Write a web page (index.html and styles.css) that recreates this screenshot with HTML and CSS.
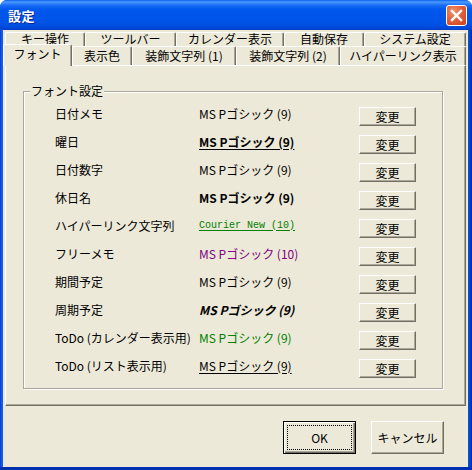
FILE: index.html
```html
<!DOCTYPE html>
<html lang="ja">
<head>
<meta charset="utf-8">
<link rel="stylesheet" href="styles.css">
</head>
<body>
<div class="window">
  <div class="titlebar">
    <span class="title">設定</span>
    <span class="close"><svg width="13" height="13" viewBox="0 0 13 13"><path d="M2 2 L11 11 M11 2 L2 11" stroke="#fff" stroke-width="2.4" stroke-linecap="square"/></svg></span>
  </div>
  <div class="client">
    <div class="tabrow row1">
      <div class="tab w80">キー操作</div>
      <div class="tab w91">ツールバー</div>
      <div class="tab w108">カレンダー表示</div>
      <div class="tab w80">自動保存</div>
      <div class="tab w102">システム設定</div>
    </div>
    <div class="tabrow row2">
      <div class="tab sel">フォント</div>
      <div class="tab w60">表示色</div>
      <div class="tab w104">装飾文字列 (1)</div>
      <div class="tab w104">装飾文字列 (2)</div>
      <div class="tab w126">ハイパーリンク表示</div>
    </div>
    <div class="panel">
      <div class="group">
        <span class="legend">フォント設定</span>
        <div class="row"><span class="label">日付メモ</span><span class="font">MS Pゴシック (9)</span><span class="btn">変更</span></div>
        <div class="row"><span class="label">曜日</span><span class="font bold under">MS Pゴシック (9)</span><span class="btn">変更</span></div>
        <div class="row"><span class="label">日付数字</span><span class="font">MS Pゴシック (9)</span><span class="btn">変更</span></div>
        <div class="row"><span class="label">休日名</span><span class="font bold">MS Pゴシック (9)</span><span class="btn">変更</span></div>
        <div class="row"><span class="label">ハイパーリンク文字列</span><span class="font mono green under">Courier New (10)</span><span class="btn">変更</span></div>
        <div class="row"><span class="label">フリーメモ</span><span class="font purple">MS Pゴシック (10)</span><span class="btn">変更</span></div>
        <div class="row"><span class="label">期間予定</span><span class="font">MS Pゴシック (9)</span><span class="btn">変更</span></div>
        <div class="row"><span class="label">周期予定</span><span class="font italic">MS Pゴシック (9)</span><span class="btn">変更</span></div>
        <div class="row"><span class="label">ToDo (カレンダー表示用)</span><span class="font green">MS Pゴシック (9)</span><span class="btn">変更</span></div>
        <div class="row"><span class="label">ToDo (リスト表示用)</span><span class="font under">MS Pゴシック (9)</span><span class="btn">変更</span></div>
      </div>
    </div>
    <div class="actions">
      <span class="dbtn default"><span class="focus">OK</span></span>
      <span class="dbtn">キャンセル</span>
    </div>
  </div>
</div>
</body>
</html>
```

FILE: styles.css
```css
* { box-sizing: border-box; }
html, body { margin: 0; padding: 0; }
body {
  width: 472px;
  height: 470px;
  overflow: hidden;
  font-family: "Noto Sans CJK JP", "Liberation Sans", sans-serif;
  font-size: 12px;
  color: #000;
  background: #fff;
}
.window {
  width: 472px;
  height: 470px;
  display: flex;
  flex-direction: column;
  background: linear-gradient(to right, #0831D9 0, #166AEE 2px, #0855DD 3px, #0855DD 468px, #0842C8 470px, #0026A8 472px);
  border-radius: 7px 7px 0 0;
  padding: 0 4px 3px 3px;
  box-shadow: inset 0 -3px 0 #0030B0;
}
.titlebar {
  height: 30px;
  flex: none;
  margin: 0 -4px 0 -3px;
  display: flex;
  align-items: center;
  justify-content: space-between;
  padding: 0 5px 0 8px;
  border-radius: 7px 7px 0 0;
  background: linear-gradient(to bottom, #0A60F0 0px, #4C9BFF 2px, #1D6FF5 5px, #0058EE 9px, #0055EA 16px, #0052E5 24px, #0048D8 28px, #003CC4 30px);
}
.title {
  color: #fff;
  font-weight: bold;
  font-size: 13px;
  text-shadow: 1px 1px 0 #0A2A90;
  letter-spacing: 0.5px;
}
.close {
  width: 21px;
  height: 21px;
  display: flex;
  align-items: center;
  justify-content: center;
  border: 1px solid #fff;
  border-radius: 3px;
  background: radial-gradient(circle at 35% 30%, #F0956E 0, #E2613A 45%, #C8401C 100%);
  margin-top: 1px;
}
.client {
  flex: 1;
  background: #ECE9D8;
  padding: 2px 2px 0 2px;
  display: flex;
  flex-direction: column;
}
.tabrow { display: flex; flex: none; }
.tab {
  background: #ECE9D8;
  border-top: 1px solid #fff;
  border-left: 1px solid #fff;
  border-right: 1px solid #716F64;
  box-shadow: inset -1px 0 0 #ACA899;
  border-radius: 2px 2px 0 0;
  text-align: center;
  white-space: nowrap;
  font-size: 12px;
}
.row1 { height: 14px; }
.row1 .tab { height: 14px; line-height: 12px; overflow: visible; }
.row2 { height: 19px; }
.row2 .tab { height: 19px; line-height: 18px; }
.row2 .tab.sel {
  width: 69px;
  height: 22px;
  line-height: 17px;
  margin: -2px 0 -1px -2px;
  position: relative;
  z-index: 2;
}
.w60 { width: 60px; }
.w80 { width: 80px; }
.w91 { width: 91px; }
.w102 { width: 102px; }
.w104 { width: 104px; }
.w108 { width: 108px; }
.w126 { width: 126px; }
.panel {
  flex: none;
  height: 341px;
  border-top: 1px solid #fff;
  border-left: 1px solid #fff;
  border-right: 1px solid #716F64;
  border-bottom: 1px solid #716F64;
  box-shadow: inset -1px -1px 0 #ACA899;
  padding: 25px 22px 0 17px;
}
.group {
  position: relative;
  height: 298px;
  border: 1px solid #ACA899;
  box-shadow: inset 1px 1px 0 #fff, 1px 1px 0 #fff;
  padding: 7px 0 0 31px;
}
.legend {
  position: absolute;
  left: 6px;
  top: -9px;
  padding: 0 1px;
  background: #ECE9D8;
  line-height: 16px;
}
.row {
  display: flex;
  align-items: center;
  height: 28px;
}
.label { width: 144px; white-space: nowrap; }
.font { width: 160px; white-space: nowrap; }
.bold { font-weight: bold; }
.under { text-decoration: underline; text-underline-offset: 2px; }
.italic { font-style: italic; font-weight: bold; }
.green { color: #008000; }
.purple { color: #800080; }
.mono { font-family: "Liberation Mono", monospace; font-size: 10px; }
.btn {
  align-self: flex-start;
  margin-top: 8px;
  width: 57px;
  height: 19px;
  display: flex;
  align-items: center;
  justify-content: center;
  border-top: 1px solid #fff;
  border-left: 1px solid #fff;
  border-right: 1px solid #716F64;
  border-bottom: 1px solid #716F64;
  box-shadow: inset -1px -1px 0 #ACA899;
  font-size: 12px;
}
.actions {
  display: flex;
  justify-content: flex-end;
  gap: 15px;
  padding: 15px 22px 0 0;
}
.dbtn {
  width: 73px;
  height: 33px;
  display: flex;
  align-items: center;
  justify-content: center;
  border-top: 1px solid #fff;
  border-left: 1px solid #fff;
  border-right: 1px solid #716F64;
  border-bottom: 1px solid #716F64;
  box-shadow: inset -1px -1px 0 #ACA899;
}
.dbtn.default {
  border: 1px solid #000;
  box-shadow: inset 1px 1px 0 #fff, inset -1px -1px 0 #716F64, inset -2px -2px 0 #ACA899;
  padding: 3px;
}
.focus {
  flex: 1;
  align-self: stretch;
  display: flex;
  align-items: center;
  justify-content: center;
  border: 1px dotted #000;
}
```
